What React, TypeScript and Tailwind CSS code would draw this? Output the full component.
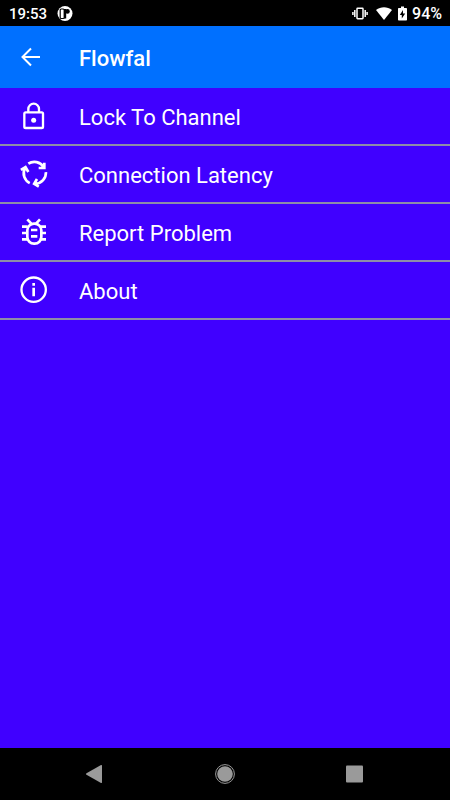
import { FC, ReactNode } from 'react'

const LockIcon: FC = () => (
  <svg className="w-8 h-8" viewBox="24 30 96 96" fill="none" stroke="currentColor" strokeWidth="7">
    <rect x="43" y="67" width="56" height="47" rx="4" />
    <path d="M55 66V57a16 16 0 0 1 32 0v9" />
    <circle cx="71" cy="91" r="7.5" fill="currentColor" stroke="none" />
  </svg>
)

const CycleIcon: FC = () => (
  <svg className="w-8 h-8" viewBox="24 30 96 96" fill="none" stroke="currentColor" strokeWidth="8">
    {[0, 120, 240].map((angle) => (
      <path
        key={angle}
        transform={`rotate(${angle} 74 75)`}
        d="M55 47A33 33 0 0 1 101 57M103 44v16H86"
      />
    ))}
  </svg>
)

const BugIcon: FC = () => (
  <svg className="w-8 h-8" viewBox="24 30 96 96" fill="none" stroke="currentColor" strokeWidth="8">
    <rect x="52" y="53" width="42" height="60" rx="20" />
    <path d="M52 40l12 13M90 40L78 53M36 62h17M91 62h17M36 81h16M92 81h16M36 100h19M89 100h19M63 72h19M63 91h19" />
  </svg>
)

const InfoIcon: FC = () => (
  <svg className="w-8 h-8" viewBox="24 30 96 96" fill="none" stroke="currentColor" strokeWidth="7">
    <circle cx="71" cy="77" r="36.5" />
    <path strokeWidth="8" d="M71 57v8M71 71v26" />
  </svg>
)

const StatusBar: FC = () => (
  <div className="flex items-center h-[26px] pt-0.5 pl-[9px] pr-2 bg-black font-medium">
    <span className="text-[15px]">19:53</span>
    <svg className="ml-[10px] w-4 h-4" viewBox="0 0 16 16">
      <circle cx="8" cy="7.5" r="7.5" fill="white" />
      <rect x="3.2" y="3" width="4" height="9.5" rx="1" fill="none" stroke="black" strokeWidth="1.2" />
      <path fill="black" d="M7 3h2.2v9.5H7z" />
      <circle cx="10.4" cy="5.4" r="2.4" fill="black" />
    </svg>
    <svg className="ml-auto w-4 h-4" viewBox="0 0 16 16" fill="none" stroke="white">
      <rect x="5" y="2.3" width="6" height="10.4" rx="0.6" strokeWidth="1.5" />
      <path strokeWidth="1.5" d="M2.8 4v7M13.2 4v7M.9 6v3M15.1 6v3" />
    </svg>
    <svg className="ml-2 w-4 h-4" viewBox="0 0 16 16" fill="white">
      <path d="M0 4C4.8.2 11.2.2 16 4L8 14z" />
    </svg>
    <svg className="ml-[6px] w-[9px] h-4" viewBox="0 0 9 16">
      <path fill="white" d="M3 .5h3V2h2.2a.8.8 0 0 1 .8.8v11a.8.8 0 0 1-.8.8H.8a.8.8 0 0 1-.8-.8v-11A.8.8 0 0 1 .8 2H3z" />
      <path fill="black" d="M5 4L1.8 9h2v3.5l3.4-5H5z" />
    </svg>
    <span className="ml-[5px] text-base">94%</span>
  </div>
)

const Header: FC = () => (
  <header className="flex items-center h-[62px] pl-[18px] bg-[#0070ff]">
    <button type="button" aria-label="Back" className="cursor-pointer">
      <svg className="w-[26px] h-[26px]" viewBox="0 0 26 26" fill="none" stroke="currentColor" strokeWidth="2">
        <path d="M22 13H5M13 4.5L4.5 13l8.5 8.5" />
      </svg>
    </button>
    <h1 className="ml-[35px] pt-0.5 text-[22px] font-medium">Flowfal</h1>
  </header>
)

const MenuItem: FC<{ icon: ReactNode; label: string }> = ({ icon, label }) => (
  <li className="border-b-2 border-[#8e8ca8]">
    <a href="#" className="flex items-center h-14 pl-[18px]">
      {icon}
      <span className="ml-[29px] pt-0.5 text-[22px]">{label}</span>
    </a>
  </li>
)

const NavigationBar: FC = () => (
  <nav className="flex items-center justify-between h-[52px] px-[85px] bg-black text-[#9a9a9a]">
    <button type="button" aria-label="Back">
      <svg className="w-5 h-5" viewBox="0 0 20 20" fill="currentColor">
        <path d="M1.5 9.2L16 1.1q1-.5 1 .6v16.6q0 1.1-1 .6L1.5 10.8q-1.3-.8 0-1.6z" />
      </svg>
    </button>
    <button type="button" aria-label="Home">
      <svg className="w-5 h-5" viewBox="0 0 20 20" fill="none" stroke="currentColor">
        <circle cx="10" cy="10" r="9.4" strokeWidth="1" />
        <circle cx="10" cy="10" r="7.8" fill="currentColor" stroke="none" />
      </svg>
    </button>
    <button type="button" aria-label="Recent apps">
      <svg className="w-5 h-5" viewBox="0 0 20 20" fill="currentColor">
        <rect x="1" y="1.5" width="17" height="17" rx="1" />
      </svg>
    </button>
  </nav>
)

const App: FC = () => {
  return (
    <div className="flex flex-col min-h-screen bg-[#4000ff] text-white font-[Roboto,sans-serif]">
      <StatusBar />
      <Header />
      <main className="flex-grow">
        <ul>
          <MenuItem icon={<LockIcon />} label="Lock To Channel" />
          <MenuItem icon={<CycleIcon />} label="Connection Latency" />
          <MenuItem icon={<BugIcon />} label="Report Problem" />
          <MenuItem icon={<InfoIcon />} label="About" />
        </ul>
      </main>
      <NavigationBar />
    </div>
  )
}

export default App
